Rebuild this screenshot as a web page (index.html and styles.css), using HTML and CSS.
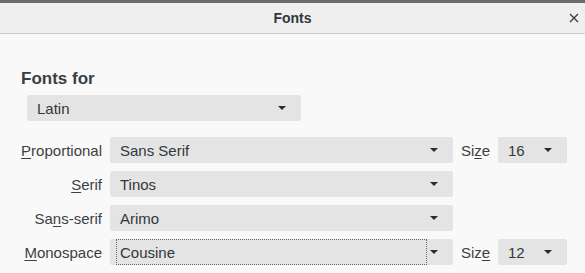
FILE: index.html
```html
<!DOCTYPE html>
<html>
<head>
    <title>Fonts</title>
    <link rel="stylesheet" href="styles.css">
</head>
<body>
    <div class="titlebar">
        <span class="title">Fonts</span>
        <svg class="close" width="10" height="10" viewBox="0 0 10 10">
            <path d="M1 1 L9 9 M9 1 L1 9" stroke="#3a3a3a" stroke-width="1.3" fill="none"/>
        </svg>
    </div>

    <div class="content">
        <div class="section-title">Fonts for</div>
        <div class="combo combo-lang">
            <span class="combo-text">Latin</span>
            <span class="arrow"></span>
        </div>

        <div class="font-grid">
            <label class="row-label"><u>P</u>roportional</label>
            <div class="combo">
                <span class="combo-text">Sans Serif</span>
                <span class="arrow"></span>
            </div>
            <label class="size-label">Si<u>z</u>e</label>
            <div class="combo">
                <span class="combo-text">16</span>
                <span class="arrow"></span>
            </div>

            <label class="row-label"><u>S</u>erif</label>
            <div class="combo">
                <span class="combo-text">Tinos</span>
                <span class="arrow"></span>
            </div>
            <span></span>
            <span></span>

            <label class="row-label">Sa<u>n</u>s-serif</label>
            <div class="combo">
                <span class="combo-text">Arimo</span>
                <span class="arrow"></span>
            </div>
            <span></span>
            <span></span>

            <label class="row-label"><u>M</u>onospace</label>
            <div class="combo focused">
                <span class="combo-text">Cousine</span>
                <span class="arrow"></span>
            </div>
            <label class="size-label">Siz<u>e</u></label>
            <div class="combo">
                <span class="combo-text">12</span>
                <span class="arrow"></span>
            </div>
        </div>
    </div>
</body>
</html>
```

FILE: styles.css
```css
body {
    margin: 0;
    background-color: #f9f9f9;
    font-family: "Liberation Sans", Arimo, Arial, sans-serif;
    font-size: 15px;
    color: #3c3f42;
}
.titlebar {
    height: 30px;
    border-top: 3px solid #6b6b6b;
    border-bottom: 1px solid #cbcbcb;
    background-color: #efefef;
    display: flex;
    align-items: center;
    justify-content: center;
    position: relative;
}
.title {
    font-size: 14px;
    font-weight: bold;
    color: #33373b;
}
.close {
    position: absolute;
    right: 6px;
    top: 10px;
}
.content {
    padding: 35px 0 0 21px;
}
.section-title {
    font-size: 17px;
    font-weight: bold;
    line-height: 20px;
    color: #3a3e42;
}
.combo {
    height: 26px;
    background-color: #e4e4e4;
    border-radius: 2px;
    display: flex;
    align-items: center;
    justify-content: space-between;
    padding: 0 15px 0 10px;
    box-sizing: border-box;
    color: #33373b;
}
.combo-lang {
    width: 274px;
    margin: 6px 0 0 6px;
}
.arrow {
    width: 0;
    height: 0;
    border-left: 4px solid transparent;
    border-right: 4px solid transparent;
    border-top: 4px solid #2b2b2b;
}
.combo.focused {
    padding-left: 6px;
}
.combo.focused .combo-text {
    flex: 1;
    height: 26px;
    line-height: 25px;
    padding-left: 3px;
    margin-right: 3px;
    border: 1px dotted #6a6a6a;
    box-sizing: border-box;
}
.font-grid {
    display: grid;
    grid-template-columns: 81px 343px 29px 69px;
    grid-auto-rows: 26px;
    column-gap: 8px;
    row-gap: 8px;
    margin-top: 16px;
    align-items: center;
}
.row-label {
    text-align: right;
    white-space: nowrap;
}
.size-label {
    white-space: nowrap;
}
u {
    text-underline-offset: 2px;
}
```
